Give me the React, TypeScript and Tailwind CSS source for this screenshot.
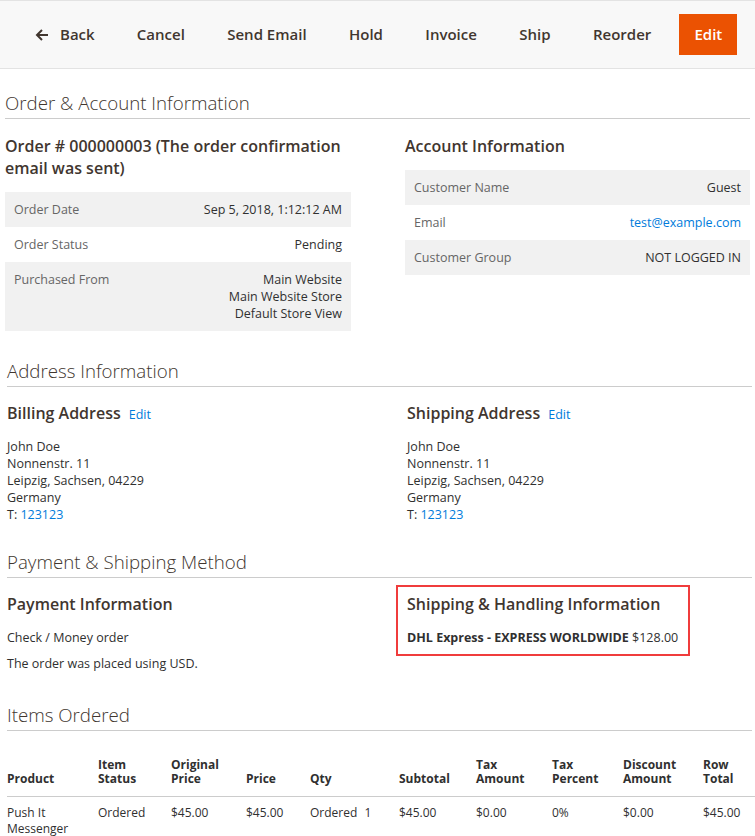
import React from "react";

const buttons = ["Cancel", "Send Email", "Hold", "Invoice", "Ship", "Reorder"];

const orderRows = [
  { label: "Order Date", value: ["Sep 5, 2018, 1:12:12 AM"] },
  { label: "Order Status", value: ["Pending"] },
  {
    label: "Purchased From",
    value: ["Main Website", "Main Website Store", "Default Store View"],
  },
];

const columns = [
  ["", "Product"],
  ["Item", "Status"],
  ["Original", "Price"],
  ["", "Price"],
  ["", "Qty"],
  ["", "Subtotal"],
  ["Tax", "Amount"],
  ["Tax", "Percent"],
  ["Discount", "Amount"],
  ["Row", "Total"],
];

const SectionTitle = ({ children, className = "" }: { children: React.ReactNode; className?: string }) => (
  <h2
    className={`border-b border-[#cccccc] pb-[2px] text-[18.7px] font-light leading-[26px] text-[#41362f] ${className}`}
  >
    {children}
  </h2>
);

const Address = ({ title }: { title: string }) => (
  <div>
    <h3 className="text-[16px] font-semibold leading-[22px] text-[#41362f]">
      {title}
      <a className="ml-[8px] text-[12.5px] font-normal text-[#007bdb]">Edit</a>
    </h3>
    <address className="mt-[12px] text-[12.5px] not-italic leading-[17px] text-[#303030]">
      John Doe
      <br />
      Nonnenstr. 11
      <br />
      Leipzig, Sachsen, 04229
      <br />
      Germany
      <br />
      T: <a className="text-[#007bdb]">123123</a>
    </address>
  </div>
);

export default function App() {
  return (
    <div className="min-h-screen bg-white font-['Open_Sans',sans-serif] text-[#303030]">
      {/* Page actions */}
      <div className="flex h-[69px] items-center border-y border-[#e3e3e3] bg-[#f8f8f8] pl-[14px]">
        <button className="flex items-center gap-[11px] px-[21px] text-[15px] font-semibold text-[#41362f]">
          <svg className="h-[14px] w-[14px]" viewBox="0 0 14 14" fill="none" stroke="currentColor" strokeWidth={2}>
            <path d="M13 7H2M7 2 2 7l5 5" />
          </svg>
          Back
        </button>
        {buttons.map((b) => (
          <button key={b} className="px-[21.2px] text-[15px] font-semibold text-[#41362f]">
            {b}
          </button>
        ))}
        <button className="ml-[7px] h-[41px] bg-[#eb5202] px-[15px] text-[15px] font-semibold text-white">
          Edit
        </button>
      </div>

      {/* Order & Account Information */}
      <section className="px-[5px]">
        <SectionTitle className="mt-[21px]">Order &amp; Account Information</SectionTitle>
        <div className="mt-[16px] grid grid-cols-[346px_1fr] gap-[54px]">
          <div>
            <h3 className="text-[16px] font-semibold leading-[22px] text-[#41362f]">
              Order # 000000003 (The order confirmation email was sent)
            </h3>
            <div className="mt-[13px] text-[12.5px] leading-[17px]">
              {orderRows.map((r, i) => (
                <div
                  key={r.label}
                  className={`flex justify-between px-[9px] py-[9px] ${i % 2 === 0 ? "bg-[#f1f1f1]" : ""}`}
                >
                  <span className="text-[#666666]">{r.label}</span>
                  <span className="text-right">
                    {r.value.map((v) => (
                      <div key={v}>{v}</div>
                    ))}
                  </span>
                </div>
              ))}
            </div>
          </div>
          <div>
            <h3 className="text-[16px] font-semibold leading-[22px] text-[#41362f]">Account Information</h3>
            <div className="mt-[13px] text-[12.5px] leading-[17px]">
              <div className="flex justify-between bg-[#f1f1f1] px-[9px] py-[9px]">
                <span className="text-[#666666]">Customer Name</span>
                <span>Guest</span>
              </div>
              <div className="flex justify-between px-[9px] py-[9px]">
                <span className="text-[#666666]">Email</span>
                <a className="text-[#007bdb]">test@example.com</a>
              </div>
              <div className="flex justify-between bg-[#f1f1f1] px-[9px] py-[9px]">
                <span className="text-[#666666]">Customer Group</span>
                <span>NOT LOGGED IN</span>
              </div>
            </div>
          </div>
        </div>
      </section>

      {/* Address Information */}
      <section className="pl-[7px] pr-[3px]">
        <SectionTitle className="mt-[27px]">Address Information</SectionTitle>
        <div className="mt-[15px] grid grid-cols-[400px_1fr]">
          <Address title="Billing Address" />
          <Address title="Shipping Address" />
        </div>
      </section>

      {/* Payment & Shipping Method */}
      <section className="pl-[7px] pr-[3px]">
        <SectionTitle className="mt-[26px]">Payment &amp; Shipping Method</SectionTitle>
        <div className="mt-[15px] grid grid-cols-[400px_1fr]">
          <div>
            <h3 className="text-[16px] font-semibold leading-[22px] text-[#41362f]">Payment Information</h3>
            <p className="mt-[14px] text-[12.5px] leading-[17px]">Check / Money order</p>
            <p className="mt-[9px] text-[12.5px] leading-[17px]">The order was placed using USD.</p>
          </div>
          <div className="relative">
            <h3 className="text-[16px] font-semibold leading-[22px] text-[#41362f]">
              Shipping &amp; Handling Information
            </h3>
            <p className="mt-[14px] text-[12.5px] leading-[17px]">
              <strong className="font-bold text-[#303030]">DHL Express - EXPRESS WORLDWIDE</strong> $128.00
            </p>
            <div className="absolute left-[-11px] top-[-8px] h-[71px] w-[294px] border-2 border-[#f03c3c]" />
          </div>
        </div>
      </section>

      {/* Items Ordered */}
      <section className="pl-[7px]">
        <SectionTitle className="mt-[30px] mr-[3px]">Items Ordered</SectionTitle>
        <div className="mt-[27px] text-[12px]">
          <div className="grid grid-cols-[91px_73px_75px_64px_89px_77px_76px_71px_80px_1fr] items-end border-b border-[#cccccc] pb-[10px] font-bold leading-[14px] text-[#303030]">
            {columns.map(([a, b], i) => (
              <div key={i}>
                {a && <div>{a}</div>}
                <div>{b}</div>
              </div>
            ))}
          </div>
          <div className="grid grid-cols-[91px_73px_75px_64px_89px_77px_76px_71px_80px_1fr] pt-[8px] leading-[16px]">
            <div>
              Push It
              <br />
              Messenger
            </div>
            <div>Ordered</div>
            <div>$45.00</div>
            <div>$45.00</div>
            <div>
              Ordered <span className="ml-[4px]">1</span>
            </div>
            <div>$45.00</div>
            <div>$0.00</div>
            <div>0%</div>
            <div>$0.00</div>
            <div>$45.00</div>
          </div>
        </div>
      </section>
    </div>
  );
}
